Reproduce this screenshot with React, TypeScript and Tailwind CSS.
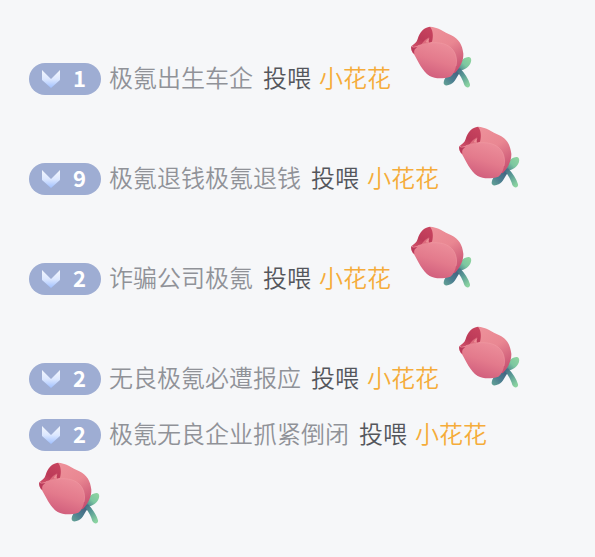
import React from "react";

type Gift = { level: number; user: string };

const gifts: Gift[] = [
  { level: 1, user: "极氪出生车企" },
  { level: 9, user: "极氪退钱极氪退钱" },
  { level: 2, user: "诈骗公司极氪" },
  { level: 2, user: "无良极氪必遭报应" },
  { level: 2, user: "极氪无良企业抓紧倒闭" },
];

function Gradients() {
  return (
    <svg className="absolute size-0" aria-hidden="true">
      <defs>
        <linearGradient id="chevron" x1="0" y1="0" x2="0" y2="1">
          <stop offset="0" stopColor="#f4f7fd" />
          <stop offset="0.5" stopColor="#dde8ff" />
          <stop offset="1" stopColor="#a0c0ff" />
        </linearGradient>
        <linearGradient id="back" x1="0.2" y1="0" x2="0.8" y2="1">
          <stop offset="0" stopColor="#ee929b" />
          <stop offset="0.5" stopColor="#e98792" />
          <stop offset="1" stopColor="#c64e70" />
        </linearGradient>
        <linearGradient id="front" x1="0.75" y1="0" x2="0.35" y2="1">
          <stop offset="0" stopColor="#ec8e9a" />
          <stop offset="0.5" stopColor="#e37a8c" />
          <stop offset="1" stopColor="#cf5b7b" />
        </linearGradient>
        <linearGradient id="inner" x1="0.8" y1="0" x2="0.2" y2="1">
          <stop offset="0" stopColor="#c8445f" />
          <stop offset="0.6" stopColor="#bc3a58" />
          <stop offset="1" stopColor="#cf5069" />
        </linearGradient>
        <linearGradient id="leaf" x1="0" y1="1" x2="1" y2="0">
          <stop offset="0" stopColor="#3e7189" />
          <stop offset="0.5" stopColor="#7cc7a0" />
          <stop offset="1" stopColor="#92d6a0" />
        </linearGradient>
        <linearGradient id="lowerLeaf" x1="1" y1="0" x2="0" y2="1">
          <stop offset="0" stopColor="#405b7c" />
          <stop offset="0.6" stopColor="#4c7f90" />
          <stop offset="1" stopColor="#65a596" />
        </linearGradient>
        <linearGradient id="stem" x1="0" y1="0" x2="0.7" y2="1">
          <stop offset="0" stopColor="#3d607f" />
          <stop offset="0.5" stopColor="#599a96" />
          <stop offset="1" stopColor="#8ad3a1" />
        </linearGradient>
      </defs>
    </svg>
  );
}

function Rose() {
  return (
    <svg viewBox="3 6 240 240" className="size-20 shrink-0" role="img" aria-label="小花花">
      <path d="M170 168C172 146 188 127 205 126C215 125 216 138 210 148C202 161 190 165 180 168Z" fill="url(#leaf)" />
      <path d="M180 163C160 164 134 181 131 202C130 213 141 213 152 208C167 200 170 183 182 170Z" fill="url(#lowerLeaf)" />
      <path d="M166 164C180 177 189 195 193 210C198 221 212 219 210 208C205 190 194 175 180 160Z" fill="url(#stem)" />
      <path d="M90 35C111 35 133 51 154 61C177 72 187 90 190 116C191 137 180 158 164 175L100 140L50 90Z" fill="url(#back)" />
      <path d="M90 35C72 37 59 51 53 72C50 83 41 88 34 94L46 98C62 91 81 87 96 80C101 63 99 46 90 35Z" fill="url(#inner)" />
      <path d="M65 87C70 79 79 71 88 67C83 76 82 81 87 84L61 95Z" fill="#dc6a7c" />
      <path d="M77 82C80 75 84 71 88 69C86 75 85 80 88 83Z" fill="#ec8f97" />
      <path d="M34 92C35 98 41 96 47 94C77 83 116 80 139 90C164 101 174 127 168 153C166 166 160 179 151 185C131 191 108 193 89 183C66 169 55 139 42 118C35 112 33 101 34 92Z" fill="url(#front)" />
      <path d="M34 92C36 99 43 97 52 97C44 101 41 107 43 117C35 111 32 100 34 92Z" fill="#b93959" />
      <path d="M54 92C84 81 120 80 140 90C164 101 174 127 168 153" fill="none" stroke="#f2a0a9" strokeWidth="2" strokeOpacity="0.7" />
    </svg>
  );
}

function LevelBadge({ level }: { level: number }) {
  return (
    <span className="flex h-8 w-[72px] shrink-0 items-center gap-3 rounded-full bg-[#9eadd3] pl-3 text-white">
      <svg viewBox="0 0 20 20" className="size-5 shrink-0" aria-hidden="true">
        <path d="M1 1L10 10L19 1V11L10 19L1 11Z" fill="url(#chevron)" />
      </svg>
      <span className="pb-1 text-[22px] leading-7 font-bold">{level}</span>
    </span>
  );
}

export default function App() {
  return (
    <main className="min-h-screen bg-[#f6f7f9] px-[29px] py-[17px] font-['Noto_Sans_CJK_SC',sans-serif]">
      <Gradients />
      <ul className="flex flex-col gap-5">
        {gifts.map((gift, i) => (
          <li key={i} className="flex flex-wrap items-end">
            <p className="mr-[10px] flex h-9 items-center text-2xl whitespace-nowrap">
              <LevelBadge level={gift.level} />
              <span className="ml-2 pb-1 font-[350] text-[#909298]">{gift.user}</span>
              <span className="ml-[10px] pb-1 font-[350] text-[#54565c]">投喂</span>
              <span className="ml-2 pb-1 font-[350] text-[#f5ac3a]">小花花</span>
            </p>
            <Rose />
          </li>
        ))}
      </ul>
    </main>
  );
}
